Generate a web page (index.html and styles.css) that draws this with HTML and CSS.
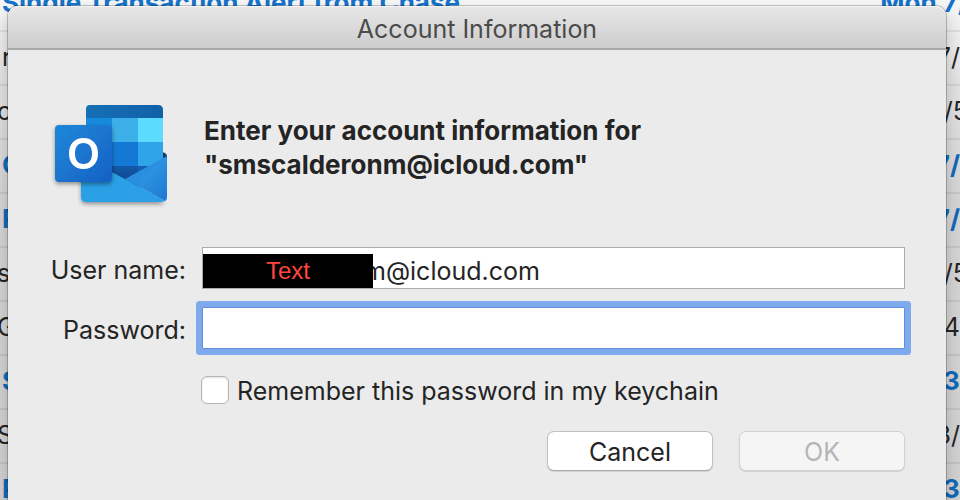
FILE: index.html
```html
<!DOCTYPE html>
<html lang="en">
<head>
<meta charset="utf-8">
<title>Account Information</title>
<link rel="stylesheet" href="styles.css">
</head>
<body>
<ul class="mail">
  <li class="row unread"><span>Single Transaction Alert from Chase</span><span class="date over">Mon 7/</span></li>
  <li class="row"><span>r</span><span class="date">7/</span></li>
  <li class="row cut"><span>c</span><span class="date over">/5</span></li>
  <li class="row unread"><span>C</span><span class="date">7/</span></li>
  <li class="row unread"><span>P</span><span class="date">7/</span></li>
  <li class="row cut"><span>su</span><span class="date over">/5</span></li>
  <li class="row cut"><span>G</span><span class="date">/4</span></li>
  <li class="row unread"><span>S</span><span class="date over">3,</span></li>
  <li class="row cut"><span>S</span><span class="date">3/</span></li>
  <li class="row unread"><span>P</span><span class="date over">3,</span></li>
</ul>
<main class="dialog" role="dialog" aria-labelledby="title">
  <h1 class="titlebar" id="title">Account Information</h1>
  <form class="content">
    <div class="intro">
      <svg class="logo" viewBox="0 0 120 112" role="img" aria-label="Outlook">
        <defs>
          <linearGradient id="top" x2="1"><stop stop-color="#1670b5"/><stop offset="1" stop-color="#1160a9"/></linearGradient>
          <linearGradient id="badge" x2="1" y2="1"><stop stop-color="#1e88d8"/><stop offset="1" stop-color="#1760c4"/></linearGradient>
          <linearGradient id="front" x2="1" y2="1"><stop stop-color="#2aa0e4"/><stop offset="1" stop-color="#2d9fe8"/></linearGradient>
          <linearGradient id="flap" x2="1" y2="1"><stop stop-color="#2686dc"/><stop offset=".5" stop-color="#2c91e0"/><stop offset="1" stop-color="#1b78d0"/></linearGradient>
          <linearGradient id="deep" x2="0" y2="1"><stop stop-color="#1258a8"/><stop offset="1" stop-color="#103f85"/></linearGradient>
          <filter id="soft" x="-20%" y="-20%" width="140%" height="150%"><feDropShadow dx="0" dy="2" stdDeviation="2" flood-opacity=".4"/></filter>
          <clipPath id="book"><path d="M40 5h68q5 0 5 5v78H36V9q0-4 4-4z"/></clipPath>
        </defs>
        <path d="M112 52l3 1q2 1 2 4v6h-5z" fill="#123b6d"/>
        <g clip-path="url(#book)">
          <path d="M36 5h77v14H36z" fill="url(#top)"/>
          <path d="M36 18h26v24H36z" fill="#168bdd"/>
          <path d="M62 18h26v24H62z" fill="#3caee8"/>
          <path d="M88 18h25v24H88z" fill="#5bdcff"/>
          <path d="M36 42h26v24H36z" fill="#1268bd"/>
          <path d="M62 42h26v24H62z" fill="#1479d4"/>
          <path d="M88 42h25v24H88z" fill="#30a4e8"/>
          <path d="M36 66h52v24H36z" fill="url(#deep)"/>
          <path d="M88 66h25v24H88z" fill="#1560b4"/>
        </g>
        <path filter="url(#soft)" d="M31 56l44 23 40 22q-2 1-4 1H36q-5 0-5-5z" fill="url(#front)"/>
        <path d="M75 79l40-22q2-1 2 2v38q0 3-2 4z" fill="url(#flap)"/>
        <rect filter="url(#soft)" x="5" y="25" width="57" height="57" rx="4" fill="url(#badge)"/>
        <path fill="#fff" fill-rule="evenodd" d="M33.500 38C42.500 38 48 44 48 53.500S42.500 69 33.500 69 19 63 19 53.500 24.500 38 33.500 38zM33.500 43C28 43 25 47 25 53.500S28 64 33.500 64 42 60 42 53.500 39 43 33.500 43z"/>
      </svg>
      <h2 class="heading">Enter your account information for<br>"smscalderonm@icloud.com"</h2>
    </div>
    <div class="fields">
      <label for="user">User name:</label>
      <div class="field"><input class="text user" id="user" type="text" value="m@icloud.com"><span class="redaction">Text</span></div>
      <label for="pass">Password:</label>
      <div class="field"><input class="text focused" id="pass" type="password"></div>
    </div>
    <div class="remember"><input type="checkbox" id="keep"><label for="keep">Remember this password in my keychain</label></div>
    <div class="actions"><button type="button">Cancel</button><button type="submit" disabled>OK</button></div>
  </form>
</main>
</body>
</html>
```
FILE: styles.css
```css
* { box-sizing: border-box; }
body {
  margin: 0;
  min-height: 100vh;
  position: relative;
  overflow: hidden;
  background: linear-gradient(#f6f6f6 0, #e2e2e2 80px, #d4d4d4 200px, #d0d0d0);
  color: #242424;
  font: 25px/32px Inter, "Liberation Sans", sans-serif;
}
.mail {
  list-style: none;
  margin: -22px 0 0;
  padding: 0;
  height: calc(100vh + 22px);
  overflow: hidden;
}
.row {
  display: flex;
  justify-content: space-between;
  height: 54px;
  padding: 9px 0 0 2px;
  border-bottom: 2px solid rgba(0, 0, 0, .07);
  white-space: nowrap;
}
.unread { color: #1168b8; font-size: 26px; font-weight: 700; }
.row:first-child { color: #1473ca; }
.cut > :first-child { margin-left: -5px; }
.over { margin-right: -8px; }
.dialog {
  position: absolute;
  inset: 6px 14px auto 8px;
  min-height: 100vh;
  border-radius: 10px 10px 0 0;
  background: #ebebeb;
  box-shadow: 0 0 0 1px rgba(0, 0, 0, .22), 0 8px 16px rgba(0, 0, 0, .2);
}
.titlebar {
  margin: 0;
  height: 44px;
  padding-top: 7px;
  border-bottom: 2px solid #a9a9a9;
  border-radius: 10px 10px 0 0;
  background: linear-gradient(#e7e7e7, #cdcdcd);
  box-shadow: inset 0 1px #f4f4f4;
  color: #4b4b4b;
  font-size: 25px;
  font-weight: 400;
  text-align: center;
}
.content { padding: 50px 41px 28px 40px; }
.intro { display: flex; gap: 34px; }
.logo { flex: none; width: 120px; height: 112px; margin-left: 2px; }
.heading { margin: 14px 0 0; font-size: 26px; line-height: 34px; font-weight: 700; }
.fields {
  display: grid;
  grid-template-columns: 138px 1fr;
  gap: 18px 16px;
  align-items: center;
  margin-top: 35px;
}
.fields label { text-align: right; white-space: nowrap; padding-top: 4px; }
.field { position: relative; }
.text {
  display: block;
  width: 100%;
  height: 42px;
  border: 1px solid #acacac;
  border-radius: 0;
  padding: 5px 6px 0;
  background: #fff;
  color: inherit;
  font: inherit;
  outline: 0;
}
.user { padding-left: 161px; }
.focused { border-color: #5f91d6; border-radius: 1px; box-shadow: 0 0 0 6px #7eaaed; }
.redaction {
  position: absolute;
  left: 1px;
  bottom: 1px;
  width: 170px;
  height: 34px;
  background: #000;
  color: #ff453e;
  font: 24px/34px "Liberation Sans", sans-serif;
  text-align: center;
}
.remember { display: flex; align-items: center; gap: 8px; margin: 24px 0 0 153px; }
.remember label { padding-top: 2px; }
.remember input {
  appearance: none;
  width: 28px;
  height: 28px;
  margin: 0;
  border: 1px solid #b5b5b5;
  border-radius: 6px;
  background: #fff;
  box-shadow: inset 0 1px 2px rgba(0, 0, 0, .12);
}
.actions { display: flex; justify-content: flex-end; gap: 26px; margin-top: 24px; }
.actions button {
  width: 166px;
  height: 40px;
  padding: 2px 0 0;
  border: 1px solid #c0c0c0;
  border-bottom-color: #aaa;
  border-radius: 7px;
  background: #fff;
  box-shadow: 0 1px 1px rgba(0, 0, 0, .12);
  color: inherit;
  font: inherit;
}
.actions button:disabled { background: #f5f5f5; border-color: #d2d2d2; color: #b5b5b5; }
```
